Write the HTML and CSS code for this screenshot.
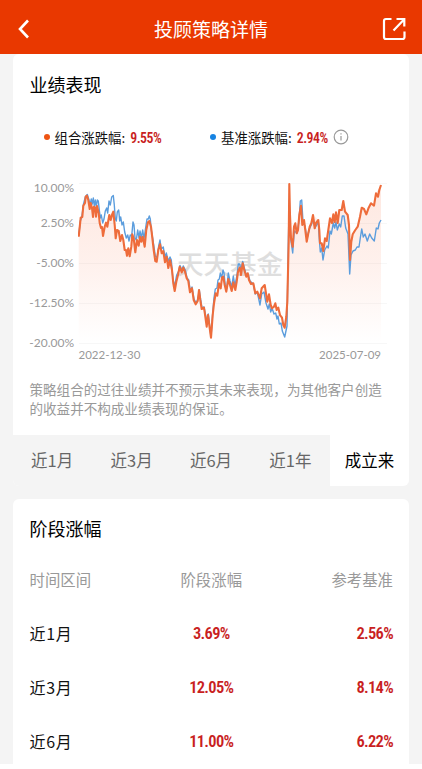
FILE: index.html
```html
<!DOCTYPE html>
<html lang="zh-CN">
<head>
    <meta charset="UTF-8">
    <meta name="viewport" content="width=device-width, initial-scale=1.0">
    <title>投顾策略详情</title>
    <link rel="stylesheet" href="styles.css">
</head>
<body>

    <header class="header">
        <svg class="back" width="12" height="20" viewBox="0 0 12 20">
            <path d="M10 1.5 L2 10 L10 18.5" />
        </svg>
        <h1>投顾策略详情</h1>
        <svg class="share" width="24" height="24" viewBox="0 0 24 24">
            <path d="M9.5 2 H4 Q2 2 2 4 V20 Q2 22 4 22 H20.5 Q22.5 22 22.5 20 V14.5" />
            <path d="M11.5 13.5 L22 2.5 M14.5 2 H22.3 V9.5" />
        </svg>
    </header>

    <section class="card">
        <h2>业绩表现</h2>

        <div class="legend">
            <div class="legend-item">
                <span class="dot orange"></span>
                <span>组合涨跌幅:</span>
                <b>9.55%</b>
            </div>
            <div class="legend-item">
                <span class="dot blue"></span>
                <span>基准涨跌幅:</span>
                <b>2.94%</b>
                <svg class="info" width="16" height="16" viewBox="0 0 16 16">
                    <circle cx="8" cy="8" r="6.8" />
                    <path d="M8 7 V11.5 M8 4.2 V5.6" />
                </svg>
            </div>
        </div>

        <div class="chart">
            <div class="axis">
                <span>10.00%</span>
                <span>2.50%</span>
                <span>-5.00%</span>
                <span>-12.50%</span>
                <span>-20.00%</span>
            </div>
            <svg class="plot" width="312" height="165" viewBox="78 180 312 165">
                <defs>
                    <linearGradient id="fill" gradientUnits="userSpaceOnUse" x1="0" y1="183" x2="0" y2="343">
                        <stop offset="0" stop-color="#f9602f" stop-opacity="0.15" />
                        <stop offset="0.5" stop-color="#f9602f" stop-opacity="0.09" />
                        <stop offset="1" stop-color="#f9602f" stop-opacity="0" />
                    </linearGradient>
                </defs>
                <path class="grid" d="M79 183.5H387 M79 223.5H387 M79 263.5H387 M79 303.5H387 M79 343.5H387" />
                <text class="watermark" x="177" y="273.5" textLength="106">天天基金</text>
                <path class="area" fill="url(#fill)" d="M78.7 343 L78.7 236.7 L80.5 218 L83.3 205.7 L87 195.7 L92 208 L97 206 L99.7 223 L103 236 L106 222.7 L109.3 215 L113.3 211.7 L115.7 238.3 L118.7 231 L122 238 L127 255.7 L129.7 256.3 L132.3 234.3 L135.3 252.3 L140 236.7 L144.7 246.7 L149.3 221 L152 235 L156 261.7 L160 244.3 L165 262.3 L170 260 L174.7 291 L179.7 266.7 L185 271.7 L190 292.3 L195.7 304.3 L199 290 L201.7 309 L206.7 326.7 L208 315 L211 337.7 L214 303.3 L219 283.3 L223.3 276.7 L226.3 291.7 L228.3 279 L235.3 290 L238 271.7 L242.7 263.3 L247.7 275 L253.3 283.3 L260 298.3 L264.7 285 L267.3 301.7 L274 306.7 L280 315 L284.7 327.7 L287.3 301.7 L289.3 183.3 L291 238.3 L292.7 246.7 L295.3 223.3 L298 230 L301 205.7 L306.7 241.7 L313 215 L318.3 220 L320 243.3 L323.3 251 L328.3 230 L330 218.3 L339.3 213.3 L343.3 201 L347.7 215 L350 260 L352.7 234.3 L357.7 226.7 L361.7 207.7 L366.3 214.3 L371 203.3 L374 205.7 L376 193.3 L381 185 L381 343 Z" />
                <polyline class="line benchmark" points="78.7,236 80.3,221 82,216 83.3,205 85.3,197 87.3,194.5 88.7,199 90,205 91.3,199 92.3,204 93.3,198 94.3,206 95.3,200 96.3,207 97.3,200 98.3,201 99.3,210 100.3,218 101.3,215 102.7,223 104,219 105.3,211 106.7,208 107.7,213 109,201 110.3,205 111.7,197 113.3,195.5 114.3,205 115.3,219 116.3,221 117.3,212 118.7,210 119.7,221 120.7,217 122,225 123.3,222 124.7,232 126.3,238 127.7,235 129,241 130.3,235 131.7,236 133,222 134,225 135,238 136.3,240 137.7,230 139,238 140,231 141.3,238 142.7,230 144,239 145.3,230 147,219 148.3,219 149.3,216 150.3,219 151.3,230 153,240 155.3,256 157,258 158.7,246 160,240 161.3,249 163.3,247 165,258 166.3,253 168.3,261 170,257 171.3,260 173,280 174.7,286 176.7,275 178.7,271 180,265.5 182,270 183.3,266 185.3,270 187,278 188.7,280 190.3,291 192,287 194,299 196,303 198,299 199.3,290 200.7,300 202,308 204,307 205.7,316 207,323 208.3,314 211,337 212.7,313 214,298 215.3,289 217,288 218,280 219.3,279 220.3,273 221.7,278 223,270 224,273 225.3,286 226.7,289 228.3,273 230,281 231.7,287 233.3,276 235,286 237,275 238.3,264 239.7,264 241,270 242.7,261.5 244.3,268 246.3,275 248,274 250,281 253.3,284 255.3,294 257.3,292 260,305 261.7,294 264,292 266,303 268,309 269.3,304 270.7,312 272,308 274,314 275.7,313 277,319 278,316 279.3,324 281,323 282.3,331 284.7,337 287,326 288.3,243 289.3,200 290.3,236 292.7,253 294.3,231 297,233 299,221 300.3,201 301.7,200 303,222 305,226 307,239 309.3,229 311.7,224 313,217 315,228 318.3,222 319.3,239 320.3,252 321.7,248 323,260 324.7,250 327,246 328.3,248 330,231 331.3,234 333.3,223 334.7,228 336,222 337.3,230 339.3,224 340.7,227 342.3,216 344,216 345.7,228 348,234 349.7,274 351,255 353,251 355.3,250 357,247 359,247 360.3,238 361.7,229 363.3,237 365,234 367.3,241 369.7,234 371.7,238 374.3,241 376.3,228 378,229 379.3,223 381,220" />
                <polyline class="line portfolio" points="78.7,236.7 80.3,221.7 80.7,217.7 82.3,217 83.3,205.7 85,203 85.7,196.7 87,195.7 88.3,200 89.7,209 90.7,203 92,208 93,217 94,206.7 95.3,208 96,216.7 97,206 98.7,213 99.7,223 101,228 102,227 103,236 104.7,226.7 106,222.7 107.3,226.7 109.3,215 110.7,220 112,215 113.3,211.7 114.7,225 115.7,238.3 117,230 118.7,231 120.3,241 122,235 123.3,240 124.7,250 126,250 127,255.7 128.3,248.3 129.7,256.3 131.3,246.7 132.3,234.3 133.7,238.3 135.3,252.3 137,240 138.7,245.7 140,236.7 141.3,241.7 142.7,236.7 144.7,246.7 146.3,230 148,222.3 149.3,221 151,226.7 152,235 153.7,250 155.3,261 156.7,261.7 158.3,250 160,244.3 161.7,253.3 163.3,251 165,262.3 166.7,256.7 168.3,268 170,260 172,270 173.3,283.3 174.7,291 176.3,281.7 178,275 179.7,266.7 181.7,272.3 183.3,267.7 185,271.7 186.7,278.3 188.3,281 190,292.3 192,288.3 193.7,300 195.7,304.3 197.7,301 199,290 200.3,300 201.7,309 204,307.7 205.3,316.7 206.7,326.7 208,315 209.3,325 211,337.7 212.7,315 214,303.3 215.7,293.3 217.3,295.7 219,283.3 220.7,288.3 222,277.7 223.3,276.7 224.7,285 226.3,291.7 228.3,279 230,285 231.7,291 233.3,282.3 235.3,290 236.7,281.7 238,271.7 239.7,267.7 241,275 242.7,263.3 244.3,270 246.3,276.7 247.7,273.3 249,280 251,284 253.3,283.3 255.3,293.3 257.3,291.7 260,298.3 261.7,288.3 264.7,285 266,293.3 267.3,301.7 269,294.3 270.7,305 272,308.3 274,306.7 275.3,303.3 276.7,310 278.3,307.7 280,315 282,317.7 283.3,325 284.7,327.7 286.3,316.7 287.3,301.7 288.7,241.7 289.3,184 290,215 291,238.3 292.7,246.7 294,226.7 295.3,223.3 296.7,233.3 298,230 299.3,215 301,205.7 302.3,225 304,220 305.3,230 306.7,241.7 308.3,233.3 309.7,226.7 311.3,223.3 313,215 314.7,228.3 316,223 318.3,220 319.3,230 320,243.3 321.7,243.3 323.3,251 325,238.3 326.7,241 328.3,230 330,218.3 332,223 333.3,214.3 334.7,222 336,212.3 337.7,223 339.3,210 341.7,210 343.3,201 345,211.7 347.7,215 349,225 350,260 351.3,241.7 352.7,234.3 355.3,230 357.7,226.7 360,216.7 361.7,207.7 364,209 366.3,214.3 368.7,207.7 371,203.3 374,205.7 376,193.3 378,196.7 379.3,190 381,185" />
            </svg>
        </div>
        <div class="dates">
            <span>2022-12-30</span>
            <span>2025-07-09</span>
        </div>

        <p class="note">策略组合的过往业绩并不预示其未来表现，为其他客户创造的收益并不构成业绩表现的保证。</p>

        <nav class="tabs">
            <span>近1月</span>
            <span>近3月</span>
            <span>近6月</span>
            <span>近1年</span>
            <span class="active">成立来</span>
        </nav>
    </section>

    <section class="card stages">
        <h2>阶段涨幅</h2>
        <div class="row head">
            <span>时间区间</span>
            <span>阶段涨幅</span>
            <span>参考基准</span>
        </div>
        <div class="row">
            <span>近1月</span>
            <b>3.69%</b>
            <b>2.56%</b>
        </div>
        <div class="row">
            <span>近3月</span>
            <b>12.05%</b>
            <b>8.14%</b>
        </div>
        <div class="row">
            <span>近6月</span>
            <b>11.00%</b>
            <b>6.22%</b>
        </div>
    </section>
    <footer class="bottom"></footer>

</body>
</html>
```
FILE: styles.css
```css
* {
    box-sizing: border-box;
}

body {
    margin: 0;
    height: 769px;
    overflow: hidden;
    background: #f4f4f4;
    color: #111;
    font-family: "Noto Sans CJK SC", sans-serif;
}

h1, h2, p {
    margin: 0;
    font-weight: 400;
}

/* Header */
.header {
    height: 53.5px;
    padding: 4px 16px 0 18px;
    display: flex;
    align-items: center;
    justify-content: space-between;
    background: #e93800;
    color: #fff;
}

.header h1 {
    font-size: 19px;
    line-height: 28px;
    padding-left: 10px;
}

.header svg {
    fill: none;
    stroke: #fff;
    stroke-width: 2.6;
}

.header .share {
    stroke-width: 2.2;
}

.card {
    margin: 0 13px 0 12.5px;
    background: #fff;
    border-radius: 6px;
    overflow: hidden;
}

.card h2 {
    padding: 16.5px 17px 0;
    font-size: 18px;
    line-height: 28px;
    color: #000;
}

b {
    font-family: Roboto, sans-serif;
    font-weight: 600;
    font-stretch: 80%;
    color: #c91f1f;
}

/* Legend */
.legend {
    display: flex;
    margin-top: 29px;
    padding-left: 31px;
    height: 20px;
    font-size: 13.4px;
    line-height: 20px;
}

.legend-item {
    display: flex;
    align-items: center;
    width: 166.5px;
}

.legend b {
    width: 32px;
    margin-left: 5px;
    padding-top: 2px;
    font-size: 13.8px;
    letter-spacing: -0.5px;
}

.dot {
    width: 6px;
    height: 6px;
    margin-right: 5px;
    border-radius: 50%;
}

.dot.orange {
    background: #ee5413;
}

.dot.blue {
    background: #1683e2;
}

.info {
    flex: none;
    margin-left: 4px;
    fill: none;
    stroke: #999;
    stroke-width: 1.2;
}

/* Chart */
.chart {
    display: flex;
    margin-top: 33px;
    height: 165px;
}

.axis {
    width: 65.5px;
    padding-right: 4px;
    text-align: right;
}

.axis span,
.dates span {
    font-family: Lato, sans-serif;
    font-size: 12px;
    line-height: 16px;
    color: #999;
}

.axis span {
    display: block;
    height: 40px;
}

.axis span:first-child {
    height: 35px;
}

.plot {
    flex: none;
}

.grid {
    stroke: #f7f7f7;
}

.watermark {
    font-size: 26.5px;
    font-weight: 500;
    fill: #dedede;
}

.line {
    fill: none;
    stroke-linejoin: round;
}

.benchmark {
    stroke: #5b9ddd;
    stroke-width: 1.4;
}

.portfolio {
    stroke: #ee6c3b;
    stroke-width: 2.1;
}

.dates {
    display: flex;
    justify-content: space-between;
    padding: 2px 28px 0 66px;
    height: 19px;
}

.dates span {
    font-size: 11.5px;
}

.note {
    padding: 16px 16px 0 17px;
    height: 71px;
    font-size: 13.55px;
    line-height: 19px;
    color: #999;
}

/* Period tabs */
.tabs {
    display: flex;
    height: 50.5px;
    background: #f4f4f4;
    color: #666;
    font-size: 16.5px;
    line-height: 50px;
    text-align: center;
}

.tabs span {
    width: 79.4px;
}

.tabs .active {
    flex: 1;
    background: #fff;
    color: #000;
}

/* Stage table */
.stages {
    margin-top: 13.5px;
    height: 265px;
    border-radius: 6px 6px 0 0;
}

.stages h2 {
    padding-top: 15px;
}

.row {
    display: flex;
    align-items: center;
    height: 54px;
    padding: 0 16px 0 17px;
    font-size: 16px;
}

.row > * {
    flex: 1;
}

.row > :nth-child(2) {
    text-align: center;
}

.row > :nth-child(3) {
    text-align: right;
}

.row.head {
    margin-top: 9.5px;
    font-size: 15.4px;
    color: #999;
}

.row > span:first-child {
    letter-spacing: 0.7px;
}

.row.head > span:first-child {
    letter-spacing: 0;
}

.row b {
    padding-top: 2px;
    font-size: 16.5px;
    letter-spacing: -0.7px;
}

.bottom {
    height: 5px;
    background: #fff;
}
```
